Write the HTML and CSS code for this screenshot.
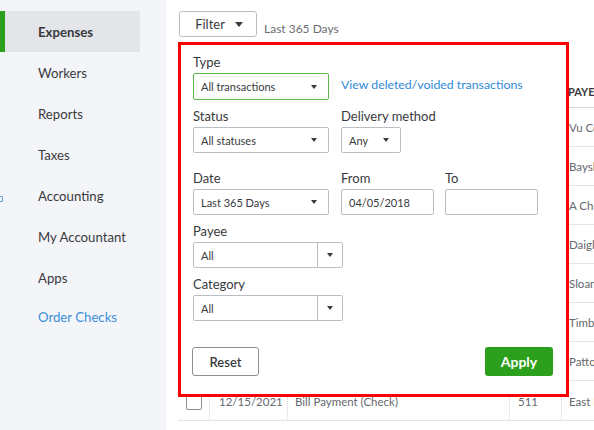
FILE: index.html
```html
<!DOCTYPE html>
<html lang="en">
<head>
    <meta charset="UTF-8">
    <title>Expenses</title>
    <link rel="stylesheet" href="styles.css">
</head>
<body>
    <aside class="sidebar">
        <nav class="nav">
            <a class="nav-item active" href="#">Expenses</a>
            <a class="nav-item" href="#">Workers</a>
            <a class="nav-item" href="#">Reports</a>
            <a class="nav-item" href="#">Taxes</a>
            <a class="nav-item" href="#"><span class="nav-icon"></span>Accounting</a>
            <a class="nav-item" href="#">My Accountant</a>
            <a class="nav-item" href="#">Apps</a>
            <a class="nav-item link" href="#">Order Checks</a>
        </nav>
    </aside>

    <main class="content">
        <div class="toolbar">
            <button class="filter-btn">Filter <span class="caret"></span></button>
            <span class="range">Last 365 Days</span>
        </div>

        <!-- список расходов (левые колонки закрыты панелью фильтра) -->
        <div class="table">
            <div class="row head">
                <div class="cell"></div>
                <div class="cell"></div>
                <div class="cell"></div>
                <div class="cell"></div>
                <div class="cell">PAYEE</div>
            </div>
            <div class="row">
                <div class="cell"><span class="check"></span></div>
                <div class="cell"></div>
                <div class="cell"></div>
                <div class="cell"></div>
                <div class="cell">Vu Contracting</div>
            </div>
            <div class="row">
                <div class="cell"><span class="check"></span></div>
                <div class="cell"></div>
                <div class="cell"></div>
                <div class="cell"></div>
                <div class="cell">Bayshore CalOil Service</div>
            </div>
            <div class="row">
                <div class="cell"><span class="check"></span></div>
                <div class="cell"></div>
                <div class="cell"></div>
                <div class="cell"></div>
                <div class="cell">A Cheung Limited</div>
            </div>
            <div class="row">
                <div class="cell"><span class="check"></span></div>
                <div class="cell"></div>
                <div class="cell"></div>
                <div class="cell"></div>
                <div class="cell">Daigle Lighting</div>
            </div>
            <div class="row">
                <div class="cell"><span class="check"></span></div>
                <div class="cell"></div>
                <div class="cell"></div>
                <div class="cell"></div>
                <div class="cell">Sloan Accounting</div>
            </div>
            <div class="row">
                <div class="cell"><span class="check"></span></div>
                <div class="cell"></div>
                <div class="cell"></div>
                <div class="cell"></div>
                <div class="cell">Timberline Construction</div>
            </div>
            <div class="row">
                <div class="cell"><span class="check"></span></div>
                <div class="cell"></div>
                <div class="cell"></div>
                <div class="cell"></div>
                <div class="cell">Patton Hardware Supplies</div>
            </div>
            <div class="row">
                <div class="cell"><span class="check"></span></div>
                <div class="cell">12/15/2021</div>
                <div class="cell">Bill Payment (Check)</div>
                <div class="cell">511</div>
                <div class="cell">East Bayside Utilities</div>
            </div>
        </div>

        <!-- выпадающая панель фильтра -->
        <div class="filter-panel">
            <div class="field-row">
                <div class="field col-wide">
                    <label class="label">Type</label>
                    <div class="select select-type">All transactions <span class="caret"></span></div>
                </div>
                <a class="deleted-link" href="#">View deleted/voided transactions</a>
            </div>

            <div class="field-row">
                <div class="field col-wide">
                    <label class="label">Status</label>
                    <div class="select">All statuses <span class="caret"></span></div>
                </div>
                <div class="field">
                    <label class="label">Delivery method</label>
                    <div class="select select-small">Any <span class="caret"></span></div>
                </div>
            </div>

            <div class="field-row date-row">
                <div class="field col-wide">
                    <label class="label">Date</label>
                    <div class="select">Last 365 Days <span class="caret"></span></div>
                </div>
                <div class="field col-date">
                    <label class="label">From</label>
                    <div class="input">04/05/2018</div>
                </div>
                <div class="field col-date">
                    <label class="label">To</label>
                    <div class="input"></div>
                </div>
            </div>

            <div class="field-row">
                <div class="field">
                    <label class="label">Payee</label>
                    <div class="combo">
                        <span class="combo-text">All</span>
                        <span class="combo-btn"><span class="caret"></span></span>
                    </div>
                </div>
            </div>

            <div class="field-row">
                <div class="field">
                    <label class="label">Category</label>
                    <div class="combo">
                        <span class="combo-text">All</span>
                        <span class="combo-btn"><span class="caret"></span></span>
                    </div>
                </div>
            </div>

            <div class="panel-footer">
                <button class="btn-reset">Reset</button>
                <button class="btn-apply">Apply</button>
            </div>
        </div>
    </main>
</body>
</html>
```

FILE: styles.css
```css
* {
    box-sizing: border-box;
}
body {
    margin: 0;
    display: flex;
    height: 100vh;
    overflow: hidden;
    background-color: #fff;
    color: #393a3d;
    font-family: Lato, "Open Sans", Arial, sans-serif;
}

/* боковое меню */
.sidebar {
    width: 166px;
    flex: none;
    background-color: #f4f5f8;
    padding-top: 11px;
}
.nav {
    display: flex;
    flex-direction: column;
    width: 140px;
}
.nav-item {
    display: flex;
    align-items: center;
    height: 41px;
    padding-left: 38px;
    font-size: 13.2px;
    color: #393a3d;
    text-decoration: none;
}
.nav-item.active {
    background-color: #e3e5e8;
    border-left: 5px solid #2ca01c;
    padding-left: 33px;
    font-weight: 700;
}
.nav-item.link {
    color: #3a8fd8;
    margin-top: -2px;
}
.nav-icon {
    width: 7px;
    height: 6px;
    margin: 7px 35px 0 -42px;
    border: 1.5px solid #5a9fd6;
    border-radius: 1px;
}

/* основная часть */
.content {
    flex: 1;
    min-width: 0;
    position: relative;
    padding: 11px 0 0 12px;
}
.toolbar {
    display: flex;
    align-items: center;
    gap: 7px;
}
.filter-btn {
    display: flex;
    align-items: center;
    justify-content: center;
    gap: 10px;
    width: 78px;
    height: 26px;
    margin-left: 1px;
    background-color: #fff;
    border: 1px solid #babec5;
    border-radius: 3px;
    font-family: inherit;
    font-size: 13px;
    color: #393a3d;
    padding: 0 0 0 2px;
}
.filter-btn .caret {
    border-left-width: 4.5px;
    border-right-width: 4.5px;
    border-top-width: 5px;
}
.range {
    margin-top: 8px;
    font-size: 12px;
    color: #6b6c72;
}
.caret {
    width: 0;
    height: 0;
    border-left: 3.5px solid transparent;
    border-right: 3.5px solid transparent;
    border-top: 4px solid #393a3d;
}

/* таблица */
.table {
    margin-top: 38px;
    width: 520px;
    font-size: 11.5px;
    color: #66686e;
}
.row {
    display: grid;
    grid-template-columns: 31px 78px 222px 52px 1fr;
    height: 39px;
    border-bottom: 1px solid #e3e5e8;
}
.row:last-child {
    height: 40px;
    padding-top: 2px;
}
.row.head {
    height: 33px;
    border-bottom-color: #d4d7dc;
    font-size: 11px;
    font-weight: 700;
    color: #393a3d;
}
.cell {
    display: flex;
    align-items: center;
    padding-left: 8px;
    white-space: nowrap;
    overflow: hidden;
}
.row:not(.head) .cell + .cell {
    border-left: 1px dotted #d4d7dc;
}
.row .cell:nth-child(2) {
    padding-left: 9px;
}
.row .cell:nth-child(3),
.row .cell:nth-child(5) {
    padding-left: 7px;
}
.check {
    width: 16px;
    height: 16px;
    border: 1px solid #8d9096;
    border-radius: 2px;
}

/* панель фильтра */
.filter-panel {
    position: absolute;
    top: 42px;
    left: 12px;
    width: 391px;
    background-color: #fff;
    border: 3px solid #ff0000;
    padding: 9px 13px 18px 12px;
    display: flex;
    flex-direction: column;
    gap: 8px;
}
.field-row {
    display: flex;
    gap: 12px;
    align-items: flex-end;
}
.date-row {
    margin-top: 9px;
}
.date-row .col-date + .col-date {
    margin-left: -1px;
}
.field {
    display: flex;
    flex-direction: column;
}
.col-wide {
    width: 136px;
}
.col-date {
    width: 93px;
}
.label {
    font-size: 13px;
    line-height: 16px;
    margin-bottom: 3px;
    color: #393a3d;
}
.select,
.input,
.combo {
    display: flex;
    align-items: center;
    height: 26px;
    border: 1px solid #babec5;
    border-radius: 2px;
    font-size: 11px;
    color: #393a3d;
    background-color: #fff;
}
.select {
    justify-content: space-between;
    padding: 0 11px 0 7px;
}
.select-type {
    height: 27px;
    border-color: #5cb94a;
}
.select-small {
    width: 60px;
}
.input {
    padding-left: 7px;
}
.combo {
    width: 150px;
}
.combo-text {
    flex: 1;
    padding-left: 7px;
}
.combo-btn {
    display: flex;
    align-items: center;
    justify-content: center;
    width: 25px;
    height: 100%;
    border-left: 1px solid #babec5;
}
.deleted-link {
    height: 27px;
    line-height: 27px;
    margin-bottom: 2px;
    font-size: 12.3px;
    color: #2d8ad6;
    text-decoration: none;
}
.panel-footer {
    display: flex;
    justify-content: space-between;
    margin-top: 18px;
}
.btn-reset,
.btn-apply {
    height: 29px;
    border-radius: 3px;
    font-family: inherit;
    cursor: pointer;
}
.btn-reset {
    width: 67px;
    margin-left: -1px;
    background-color: #fff;
    border: 1px solid #8d9096;
    font-size: 13px;
    font-weight: 600;
    color: #393a3d;
}
.btn-apply {
    width: 68px;
    background-color: #2ca01c;
    border: none;
    font-size: 14px;
    font-weight: 700;
    color: #fff;
}
```
